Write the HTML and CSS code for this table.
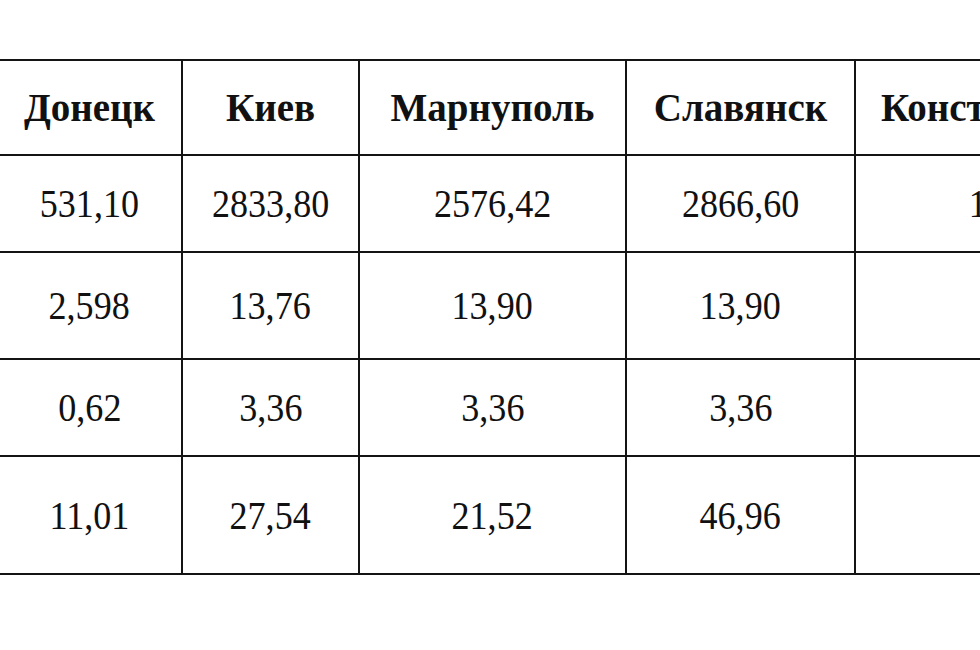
FILE: index.html
```html
<!DOCTYPE html>
<html lang="ru">
<head>
<meta charset="utf-8">
<title>Таблица</title>
<link rel="stylesheet" href="styles.css">
</head>
<body>
<table class="grid">
  <colgroup>
    <col class="c0"><col class="c1"><col class="c2"><col class="c3"><col class="c4">
  </colgroup>
  <tr class="r-head">
    <th><span class="t">Донецк</span></th>
    <th><span class="t">Киев</span></th>
    <th><span class="t">Марнуполь</span></th>
    <th><span class="t">Славянск</span></th>
    <th class="left"><span class="t">Константиновка</span></th>
  </tr>
  <tr class="r1">
    <td><span class="t">531,10</span></td>
    <td><span class="t">2833,80</span></td>
    <td><span class="t">2576,42</span></td>
    <td><span class="t">2866,60</span></td>
    <td class="left"><span class="t pad4">1866,60</span></td>
  </tr>
  <tr class="r2">
    <td><span class="t">2,598</span></td>
    <td><span class="t">13,76</span></td>
    <td><span class="t">13,90</span></td>
    <td><span class="t">13,90</span></td>
    <td></td>
  </tr>
  <tr class="r3">
    <td><span class="t">0,62</span></td>
    <td><span class="t">3,36</span></td>
    <td><span class="t">3,36</span></td>
    <td><span class="t">3,36</span></td>
    <td></td>
  </tr>
  <tr class="r4">
    <td><span class="t">11,01</span></td>
    <td><span class="t">27,54</span></td>
    <td><span class="t">21,52</span></td>
    <td><span class="t">46,96</span></td>
    <td></td>
  </tr>
</table>
</body>
</html>
```

FILE: styles.css
```css
html, body {
  margin: 0;
  padding: 0;
  background: #ffffff;
  overflow: hidden;
}

body {
  width: 980px;
  height: 650px;
  font-family: "Liberation Serif", "Times New Roman", serif;
  color: #111111;
}

.grid {
  margin-top: 59px;
  margin-left: -4px;
  border-collapse: collapse;
  table-layout: fixed;
  width: 1215px;
}

.c0 { width: 185px; }
.c1 { width: 177px; }
.c2 { width: 267px; }
.c3 { width: 229px; }
.c4 { width: 357px; }

.grid th,
.grid td {
  border: 2px solid #141414;
  padding: 0;
  text-align: center;
  vertical-align: middle;
  font-size: 41px;
  line-height: 1;
  white-space: nowrap;
  overflow: hidden;
}

.grid th {
  font-weight: bold;
  font-size: 39px;
}

.grid .left {
  text-align: left;
}

.t {
  display: inline-block;
  transform: scaleX(0.88);
  transform-origin: center center;
}

.grid th .t {
  transform: none;
}

.left .t {
  transform-origin: left center;
  padding-left: 25px;
}

.left .pad4 {
  padding-left: 128px;
}

.r-head { height: 95px; }
.r1 { height: 97px; }
.r2 { height: 107px; }
.r3 { height: 97px; }
.r4 { height: 118px; }
```
